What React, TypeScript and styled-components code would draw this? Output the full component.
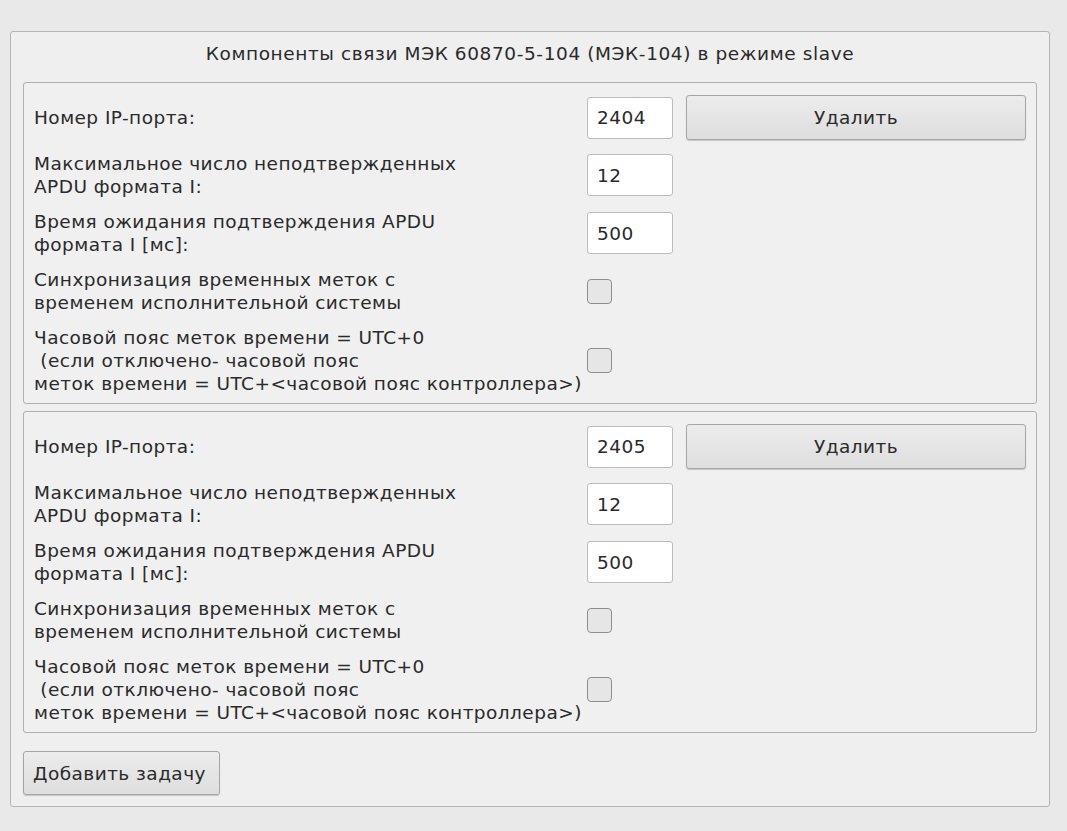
import styled, { createGlobalStyle } from 'styled-components'

const GlobalStyle = createGlobalStyle`
  html, body {
    margin: 0;
    padding: 0;
    background: #e9e9e9;
  }
  * {
    box-sizing: border-box;
  }
`

const Page = styled.div`
  width: 1067px;
  height: 831px;
  padding: 31px 0 0 10px;
  font-family: "DejaVu Sans", "Liberation Sans", sans-serif;
  font-size: 18.5px;
  letter-spacing: 0.45px;
  color: #2a2a2a;
`

const Panel = styled.div`
  width: 1040px;
  border: 1px solid #b4b4b4;
  border-radius: 3px;
  background: #efefef;
  padding: 8px 12px 11px 12px;
  display: flex;
  flex-direction: column;
`

const Title = styled.div`
  text-align: center;
  line-height: 27px;
  margin-bottom: 15px;
  letter-spacing: 0.6px;
`

const Group = styled.div`
  border: 1px solid #b0b0b0;
  border-radius: 3px;
  background: #f0f0f0;
  padding: 12px 10px 8px 10px;
  display: grid;
  grid-template-columns: minmax(0, 1fr) 86px 340px;
  column-gap: 13px;
  row-gap: 12px;
  align-items: center;
  & + & {
    margin-top: 7px;
  }
`

const Label = styled.div`
  grid-column: 1;
  line-height: 23px;
  white-space: pre;
`

const Field = styled.div`
  grid-column: 2;
  height: 42px;
  background: #ffffff;
  border: 1px solid #bcbcbc;
  border-radius: 3px;
  display: flex;
  align-items: center;
  padding-left: 9px;
`

const Check = styled.div`
  grid-column: 2;
  width: 25px;
  height: 25px;
  border: 1px solid #8e8e8e;
  border-radius: 4px;
  background: #e6e6e6;
`

const Button = styled.button`
  font: inherit;
  letter-spacing: inherit;
  color: #2a2a2a;
  height: 44px;
  border: 1px solid #a6a6a6;
  border-radius: 3px;
  background: linear-gradient(#ececec, #dedede);
  box-shadow: 0 1px 1px rgba(0, 0, 0, 0.18);
  padding: 0 9px;
`

const DeleteButton = styled(Button)`
  grid-column: 3;
  width: 340px;
  height: 45px;
`

const AddButton = styled(Button)`
  align-self: flex-start;
  margin-top: 18px;
  width: 197px;
  text-align: left;
`

interface Task {
  port: string
  maxApdu: string
  timeout: string
}

const tasks: Task[] = [
  { port: '2404', maxApdu: '12', timeout: '500' },
  { port: '2405', maxApdu: '12', timeout: '500' },
]

export default function App() {
  return (
    <>
      <GlobalStyle />
      <Page>
        <Panel>
          <Title>Компоненты связи МЭК 60870-5-104 (МЭК-104) в режиме slave</Title>
          {tasks.map((task, idx) => (
            <Group key={idx}>
              <Label>Номер IP-порта:</Label>
              <Field>{task.port}</Field>
              <DeleteButton>Удалить</DeleteButton>

              <Label>{'Максимальное число неподтвержденных\nAPDU формата I:'}</Label>
              <Field>{task.maxApdu}</Field>

              <Label>{'Время ожидания подтверждения APDU\nформата I [мс]:'}</Label>
              <Field>{task.timeout}</Field>

              <Label>{'Синхронизация временных меток с\nвременем исполнительной системы'}</Label>
              <Check />

              <Label>
                {'Часовой пояс меток времени = UTC+0\n (если отключено- часовой пояс\nметок времени = UTC+<часовой пояс контроллера>)'}
              </Label>
              <Check />
            </Group>
          ))}
          <AddButton>Добавить задачу</AddButton>
        </Panel>
      </Page>
    </>
  )
}
